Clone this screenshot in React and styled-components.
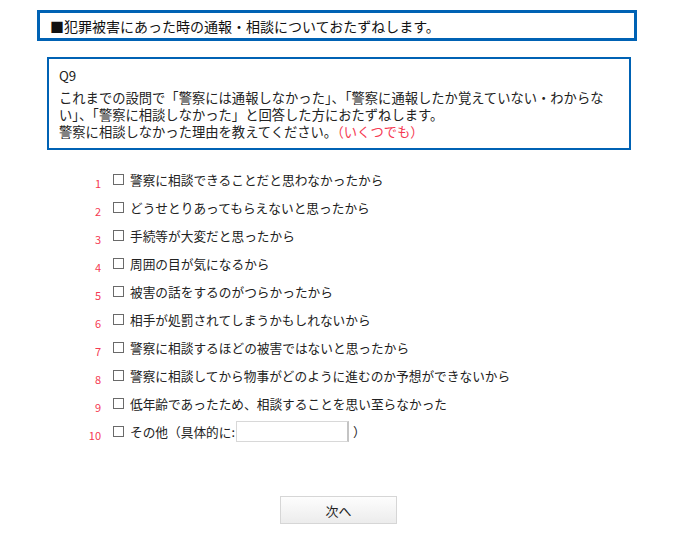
import React, { useState } from 'react';
import styled, { createGlobalStyle } from 'styled-components';

const GlobalStyle = createGlobalStyle`
  html, body {
    margin: 0;
    padding: 0;
    background: #fff;
  }
  body {
    font-family: "Noto Sans CJK JP", "Noto Sans", sans-serif;
    color: #222;
  }
`;

const Page = styled.div`
  width: 600px;
  margin-left: 37px;
  padding-top: 10px;
`;

const TitleBox = styled.h1`
  margin: 0;
  height: 31px;
  box-sizing: border-box;
  border: 3px solid #0062b4;
  padding: 0 10px;
  display: flex;
  align-items: center;
  font-size: 14px;
  font-weight: normal;
  color: #111;
`;

const QuestionBox = styled.div`
  width: 584px;
  box-sizing: border-box;
  margin: 16px 0 0 10px;
  border: 2px solid #0062b4;
  padding: 8px 10px 8px 10px;
  font-size: 13.3px;
  color: #222;
`;

const QNo = styled.div`
  line-height: 17px;
  margin-bottom: 5px;
`;

const Line = styled.div`
  line-height: 17px;
  white-space: nowrap;
`;

const Emph = styled.span`
  color: #f53a52;
`;

const OptionList = styled.ul`
  list-style: none;
  margin: 15px 0 0 0;
  padding: 0;
`;

const Row = styled.li`
  height: 28px;
  display: flex;
  align-items: center;
  font-size: 12.7px;
  color: #222;
`;

const Num = styled.span`
  width: 64px;
  text-align: right;
  font-size: 11px;
  color: #f53a52;
  align-self: center;
  padding-top: 8px;
  box-sizing: border-box;
`;

const Box = styled.span`
  width: 9px;
  height: 9px;
  border: 1px solid #6a6a6a;
  margin-left: 12px;
  margin-right: 6px;
  flex-shrink: 0;
  background: ${p => (p.$on ? '#6a6a6a' : '#fff')};
  cursor: pointer;
`;

const Label = styled.label`
  display: flex;
  align-items: center;
  cursor: pointer;
`;

const Other = styled.input`
  width: 113px;
  height: 21px;
  box-sizing: border-box;
  margin: 0 4px 0 1px;
  border: 1px solid #d8d8d8;
  border-right: 2px solid #c4c4c4;
  outline: none;
  font: inherit;
  padding: 0 3px;
`;

const Footer = styled.div`
  display: flex;
  margin-top: 51px;
  padding-left: 243px;
`;

const Next = styled.button`
  width: 117px;
  height: 28px;
  border: 1px solid #d6d6d6;
  background: linear-gradient(#fdfdfd, #ececec);
  font-family: inherit;
  font-size: 13px;
  color: #222;
  cursor: pointer;
`;

const options = [
  '警察に相談できることだと思わなかったから',
  'どうせとりあってもらえないと思ったから',
  '手続等が大変だと思ったから',
  '周囲の目が気になるから',
  '被害の話をするのがつらかったから',
  '相手が処罰されてしまうかもしれないから',
  '警察に相談するほどの被害ではないと思ったから',
  '警察に相談してから物事がどのように進むのか予想ができないから',
  '低年齢であったため、相談することを思い至らなかった',
];

export default function App() {
  const [checked, setChecked] = useState({});
  const [other, setOther] = useState('');
  const toggle = i => setChecked(c => ({ ...c, [i]: !c[i] }));

  return (
    <Page>
      <GlobalStyle />
      <TitleBox>■犯罪被害にあった時の通報・相談についておたずねします。</TitleBox>
      <QuestionBox>
        <QNo>Q9</QNo>
        <Line>これまでの設問で「警察には通報しなかった」、「警察に通報したか覚えていない・わからな</Line>
        <Line>い」、「警察に相談しなかった」と回答した方におたずねします。</Line>
        <Line>
          警察に相談しなかった理由を教えてください。<Emph>（いくつでも）</Emph>
        </Line>
      </QuestionBox>
      <OptionList>
        {options.map((text, i) => (
          <Row key={i}>
            <Num>{i + 1}</Num>
            <Label onClick={() => toggle(i)}>
              <Box $on={checked[i]} />
              {text}
            </Label>
          </Row>
        ))}
        <Row>
          <Num>10</Num>
          <Box $on={checked[9]} onClick={() => toggle(9)} />
          その他（具体的に:
          <Other value={other} onChange={evt => setOther(evt.target.value)} />）
        </Row>
      </OptionList>
      <Footer>
        <Next type="button">次へ</Next>
      </Footer>
    </Page>
  );
}
